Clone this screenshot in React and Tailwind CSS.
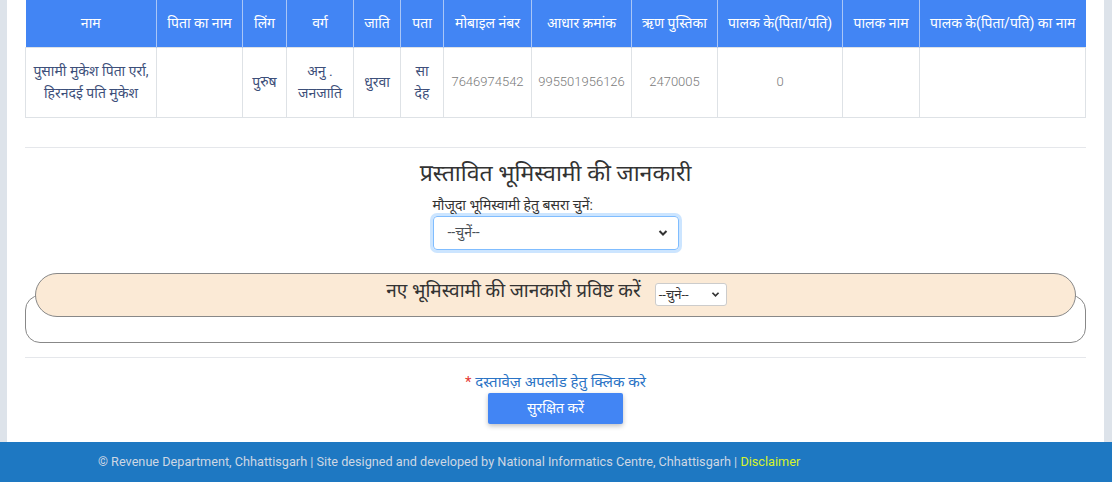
export default function App() {
  const heads = [
    "नाम",
    "पिता का नाम",
    "लिंग",
    "वर्ग",
    "जाति",
    "पता",
    "मोबाइल नंबर",
    "आधार क्रमांक",
    "ऋण पुस्तिका",
    "पालक के(पिता/पति)",
    "पालक नाम",
    "पालक के(पिता/पति) का नाम",
  ];
  const widths = [131, 86, 44, 67, 47, 43, 88, 100, 86, 125, 77, 166];
  const hi = "text-[#3d4f7a] text-[14px]";
  const num = "text-[#7a7a7a] text-[13px] font-light";
  const row = [
    { t: ["पुसामी मुकेश पिता एर्रा,", "हिरनदई पति मुकेश"], c: hi },
    { t: [""] },
    { t: ["पुरुष"], c: hi },
    { t: ["अनु .", "जनजाति"], c: hi },
    { t: ["धुरवा"], c: hi },
    { t: ["सा", "देह"], c: hi },
    { t: ["7646974542"], c: num },
    { t: ["995501956126"], c: num },
    { t: ["2470005"], c: num },
    { t: ["0"], c: num },
    { t: [""] },
    { t: [""] },
  ];
  const font = { fontFamily: "Roboto, 'Noto Sans', 'Liberation Sans', sans-serif" };
  return (
    <div className="w-[1112px] h-[482px] flex flex-col bg-[#dde3ea] overflow-hidden" style={font}>
      <div className="flex-1 ml-[7px] mr-[8px] bg-white px-[18px] flex flex-col">
        <table className="table-fixed border-collapse w-[1061px] text-center">
          <colgroup>
            {widths.map((w, i) => (
              <col key={i} style={{ width: w }} />
            ))}
          </colgroup>
          <thead>
            <tr className="h-[47px] bg-[#4285f4] text-white text-[14px]">
              {heads.map((h, i) => (
                <th key={i} className="font-normal border-x border-[#a9c6f7] px-1 whitespace-nowrap first:border-l-0 last:border-r-0">
                  {h}
                </th>
              ))}
            </tr>
          </thead>
          <tbody>
            <tr className="h-[70px]">
              {row.map((r, i) => (
                <td key={i} className={`border border-[#dee2e6] px-1 leading-[22px] ${r.c || ""}`}>
                  {r.t.map((l, j) => (
                    <div key={j}>{l}</div>
                  ))}
                </td>
              ))}
            </tr>
          </tbody>
        </table>

        <div className="mt-[29px] border-t border-[#e5e7eb]" />

        <div className="flex flex-col items-center mt-[10px]">
          <h2 className="text-[23px] leading-[32px] text-[#333]">प्रस्तावित भूमिस्वामी की जानकारी</h2>
          <div className="w-[246px] mt-[6px]">
            <div className="text-[14px] leading-[18px] text-[#333]">मौजूदा भूमिस्वामी हेतु बसरा चुनें:</div>
            <div className="mt-[2px] h-[34px] w-[246px] rounded-[4px] border border-[#80bdff] shadow-[0_0_0_3px_rgba(0,123,255,0.2)] flex items-center justify-between pl-[14px] pr-[10px] text-[14px] text-[#495057]">
              <span>--चुनें--</span>
              <svg width="10" height="8" viewBox="0 0 10 8">
                <path d="M1.5 2 L5 5.5 L8.5 2" fill="none" stroke="#333" strokeWidth="2" />
              </svg>
            </div>
          </div>
        </div>

        <div className="mt-[23px] relative h-[70px]">
          <div className="absolute left-0 right-0 top-[22px] bottom-0 border border-[#888] rounded-[15px]" />
          <div className="absolute left-[10px] right-[10px] top-0 h-[44px] rounded-[22px] border border-[#888] bg-[#fbead6] flex items-center justify-center">
            <span className="text-[19px] text-[#333] ml-[2px] -mt-[6px]">नए भूमिस्वामी की जानकारी प्रविष्ट करें</span>
            <div className="ml-[14px] h-[23px] w-[72px] bg-white rounded-[3px] border border-[#ccc] flex items-center justify-between pl-[3px] pr-[6px] text-[13px] text-[#333]">
              <span>--चुने--</span>
              <svg width="9" height="7" viewBox="0 0 10 8">
                <path d="M1.5 2 L5 5.5 L8.5 2" fill="none" stroke="#333" strokeWidth="2" />
              </svg>
            </div>
          </div>
        </div>

        <div className="mt-[14px] border-t border-[#e5e7eb]" />

        <div className="flex flex-col items-center mt-[14px]">
          <div className="text-[15px] leading-[20px]">
            <span className="text-[#e53935]">* </span>
            <span className="text-[#2a73c5]">दस्तावेज़ अपलोड हेतु क्लिक करे</span>
          </div>
          <button className="mt-[1px] h-[31px] w-[135px] bg-[#4285f4] text-white text-[14px] rounded-[2px] shadow-[0_2px_5px_rgba(0,0,0,0.25)]">
            सुरक्षित करें
          </button>
        </div>
      </div>
      <footer className="h-[40px] shrink-0 bg-[#1e78c2] flex items-center pl-[98px] text-[12.7px] text-[#cdd7e4]">
        <span>
          © Revenue Department, Chhattisgarh | Site designed and developed by National Informatics Centre, Chhattisgarh |{" "}
          <span className="text-[#d7f22a]">Disclaimer</span>
        </span>
      </footer>
    </div>
  );
}
